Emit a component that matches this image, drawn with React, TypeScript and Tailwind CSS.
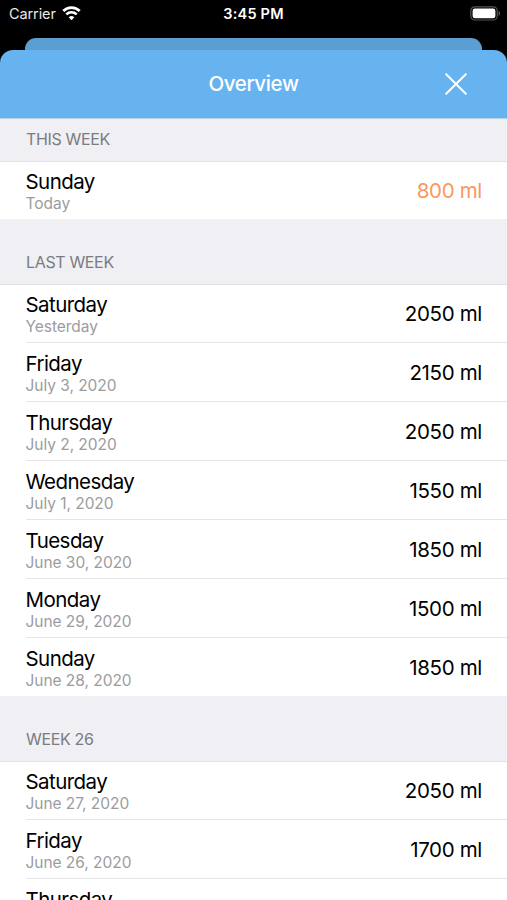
type Entry = { day: string; date: string; amount: string; goalMissed?: boolean };
type Section = { title: string; first?: boolean; entries: Entry[] };

const sections: Section[] = [
  {
    title: "THIS WEEK",
    first: true,
    entries: [{ day: "Sunday", date: "Today", amount: "800 ml", goalMissed: true }],
  },
  {
    title: "LAST WEEK",
    entries: [
      { day: "Saturday", date: "Yesterday", amount: "2050 ml" },
      { day: "Friday", date: "July 3, 2020", amount: "2150 ml" },
      { day: "Thursday", date: "July 2, 2020", amount: "2050 ml" },
      { day: "Wednesday", date: "July 1, 2020", amount: "1550 ml" },
      { day: "Tuesday", date: "June 30, 2020", amount: "1850 ml" },
      { day: "Monday", date: "June 29, 2020", amount: "1500 ml" },
      { day: "Sunday", date: "June 28, 2020", amount: "1850 ml" },
    ],
  },
  {
    title: "WEEK 26",
    entries: [
      { day: "Saturday", date: "June 27, 2020", amount: "2050 ml" },
      { day: "Friday", date: "June 26, 2020", amount: "1700 ml" },
      { day: "Thursday", date: "", amount: "" },
    ],
  },
];

function StatusBar() {
  return (
    <div className="grid h-[38px] shrink-0 grid-cols-3 items-start px-[9px] pt-[5px] text-[14.5px] leading-[18px] text-[#e8e8e8]">
      <div className="flex items-center gap-[6px]">
        <span className="tracking-[-0.1px]">Carrier</span>
        <svg width="19" height="15" viewBox="0 0 19 15" fill="none" stroke="#fff" className="-mt-[2px]">
          <path d="M1.3 5.1a11.6 11.6 0 0 1 16.4 0" strokeWidth="2.8" />
          <path d="M4.3 8.4a7.4 7.4 0 0 1 10.4 0" strokeWidth="2.5" />
          <path d="M9.5 14.2 6.7 11.3a4 4 0 0 1 5.6 0z" fill="#fff" stroke="none" />
        </svg>
      </div>
      <span className="text-center font-semibold tracking-[0.2px] text-white">3:45 PM</span>
      <div className="flex justify-end pt-[1px]">
        <svg width="31" height="15" viewBox="0 0 31 15" className="-mr-[3px]">
          <rect x="0.8" y="0.8" width="26.4" height="13.2" rx="4" fill="none" stroke="#555" strokeWidth="1.2" />
          <rect x="2.6" y="2.5" width="22.8" height="9.8" rx="2.4" fill="#fff" />
          <path d="M28.6 5v4.8c1.9-.7 1.9-4.1 0-4.8z" fill="#666" />
        </svg>
      </div>
    </div>
  );
}

function Row({ entry, last }: { entry: Entry; last: boolean }) {
  return (
    <li className={last ? "h-[58px] pl-[26px]" : "h-[59px] pl-[26px]"}>
      <div
        className={
          last
            ? "flex h-full items-center justify-between pr-[25px]"
            : "flex h-full items-center justify-between border-b border-[#e6e6e8] pr-[25px]"
        }
      >
        <div className="flex h-full flex-col pt-[9px]">
          <span className="-ml-[0.5px] text-[20.5px] leading-[23px] tracking-[-0.56px] text-black">{entry.day}</span>
          <span className="-ml-[0.5px] text-[15.5px] leading-[21px] tracking-[-0.04px] text-[#9c9c9e]">{entry.date}</span>
        </div>
        <span
          className={
            entry.goalMissed
              ? "pt-[2px] text-[20.5px] leading-[24px] tracking-[-0.33px] text-[#fa9860]"
              : "pt-[2px] text-[20.5px] leading-[24px] tracking-[-0.33px] text-black"
          }
        >
          {entry.amount}
        </span>
      </div>
    </li>
  );
}

export default function App() {
  return (
    <main className="flex h-[900px] w-[507px] flex-col overflow-hidden bg-black font-['Inter',sans-serif]">
      <StatusBar />
      <div className="mx-[25px] h-[12px] shrink-0 rounded-t-[11px] bg-[#5b9fd2]" />
      <header className="grid h-[69px] shrink-0 grid-cols-[1fr_auto_1fr] items-center rounded-t-[13px] border-b border-[#b9d3e8] bg-[#66b3f0] text-white">
        <h1 className="col-start-2 text-[20.5px] leading-[26px] font-medium tracking-[-0.35px]">Overview</h1>
        <button aria-label="Close" className="mr-[40px] justify-self-end">
          <svg width="22" height="22" viewBox="0 0 22 22" stroke="#fff" strokeWidth="2" strokeLinecap="round">
            <path d="M1.2 1.2l19.6 19.6M20.8 1.2 1.2 20.8" />
          </svg>
        </button>
      </header>
      <div className="min-h-0 flex-1 overflow-hidden bg-[#efeff4]">
        {sections.map((section) => (
          <section key={section.title}>
            <h2
              className={
                section.first
                  ? "h-[42px] pt-[9px] pl-[26px] text-[16px] leading-[22px] tracking-[-0.35px] text-[#7b7b80]"
                  : "h-[65px] pt-[32px] pl-[26px] text-[16px] leading-[22px] tracking-[-0.35px] text-[#7b7b80]"
              }
            >
              {section.title}
            </h2>
            <ul className="bg-white shadow-[inset_0_1px_0_#e2e2e5]">
              {section.entries.map((entry, i) => (
                <Row key={entry.day} entry={entry} last={i === section.entries.length - 1} />
              ))}
            </ul>
          </section>
        ))}
      </div>
    </main>
  );
}
